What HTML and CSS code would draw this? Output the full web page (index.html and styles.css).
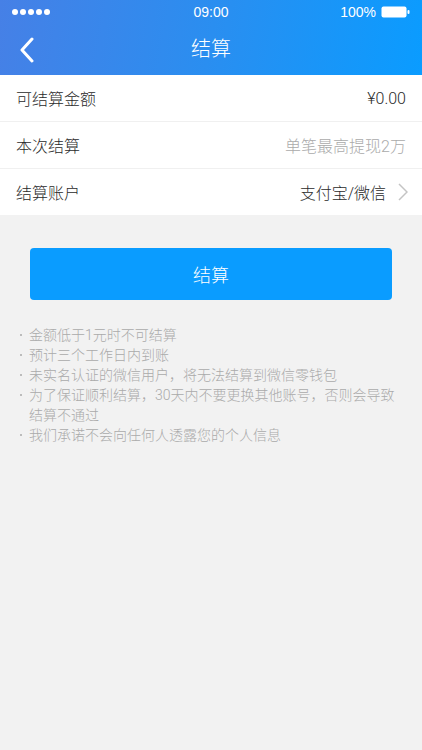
FILE: index.html
```html
<!DOCTYPE html>
<html>
<head>
    <meta charset="utf-8">
    <title>结算</title>
    <link rel="stylesheet" href="styles.css">
</head>
<body>
    <div class="header">
        <div class="status-bar">
            <div class="signal">
                <span class="dot"></span><span class="dot"></span><span class="dot"></span><span class="dot"></span><span class="dot"></span>
            </div>
            <div class="time">09:00</div>
            <div class="battery">
                <span>100%</span>
                <svg width="29" height="12" viewBox="0 0 29 12">
                    <rect x="0.5" y="0.5" width="25" height="11" rx="2" fill="#fff"/>
                    <rect x="26.5" y="4" width="2" height="4" rx="1" fill="#fff"/>
                </svg>
            </div>
        </div>
        <div class="nav-bar">
            <svg class="back" width="16" height="26" viewBox="0 0 16 26">
                <polyline points="13,2 3,13 13,24" fill="none" stroke="#fff" stroke-width="3" stroke-linecap="round" stroke-linejoin="round"/>
            </svg>
            <div class="title">结算</div>
        </div>
    </div>

    <div class="list">
        <div class="row">
            <span class="label">可结算金额</span>
            <span class="value">¥0.00</span>
        </div>
        <div class="row">
            <span class="label">本次结算</span>
            <span class="value placeholder">单笔最高提现2万</span>
        </div>
        <div class="row">
            <span class="label">结算账户</span>
            <span class="value">支付宝/微信
                <svg class="arrow" width="10" height="18" viewBox="0 0 10 18">
                    <polyline points="1,1 9,9 1,17" fill="none" stroke="#c4c4c4" stroke-width="1.5"/>
                </svg>
            </span>
        </div>
    </div>

    <div class="actions">
        <button class="submit">结算</button>
    </div>

    <ul class="notes">
        <li>金额低于1元时不可结算</li>
        <li>预计三个工作日内到账</li>
        <li>未实名认证的微信用户，将无法结算到微信零钱包</li>
        <li>为了保证顺利结算，30天内不要更换其他账号，否则会导致结算不通过</li>
        <li>我们承诺不会向任何人透露您的个人信息</li>
    </ul>
</body>
</html>
```

FILE: styles.css
```css
body {
    margin: 0;
    background-color: #f2f2f2;
    font-family: Roboto, "Noto Sans CJK SC", sans-serif;
    font-weight: 300;
    color: #2a2a2a;
}
.header {
    height: 75px;
    background: linear-gradient(100deg, #4680e6 0%, #2a8ef0 50%, #0a9cff 100%);
    color: #fff;
}
.status-bar {
    height: 24px;
    display: flex;
    align-items: center;
    justify-content: space-between;
    padding: 0 12px;
    font-family: "Liberation Sans", sans-serif;
    font-size: 14px;
    font-weight: 400;
}
.signal {
    display: flex;
    gap: 2px;
    width: 80px;
}
.dot {
    width: 6px;
    height: 6px;
    border-radius: 50%;
    background-color: #fff;
}
.time {
    line-height: 24px;
}
.battery {
    width: 80px;
    display: flex;
    justify-content: flex-end;
    align-items: center;
    gap: 5px;
}
.nav-bar {
    height: 51px;
    display: flex;
    align-items: center;
    padding: 0 19px;
    position: relative;
}
.back {
    display: block;
}
.title {
    position: absolute;
    left: 0;
    right: 0;
    text-align: center;
    font-size: 20px;
    line-height: 51px;
    pointer-events: none;
}
.list {
    background-color: #fff;
}
.row {
    height: 46px;
    display: flex;
    align-items: center;
    justify-content: space-between;
    padding: 0 16px;
    border-bottom: 1px solid #f0f0f0;
    font-size: 16px;
}
.row:last-child {
    border-bottom: none;
}
.value {
    display: flex;
    align-items: center;
    gap: 12px;
}
.placeholder {
    color: #aaa;
}
.arrow {
    margin-right: -2px;
}
.actions {
    padding: 33px 30px 0;
}
.submit {
    width: 100%;
    height: 52px;
    border: none;
    border-radius: 4px;
    background-color: #0a9cff;
    color: #fff;
    font-family: "Noto Sans CJK SC", sans-serif;
    font-weight: 300;
    font-size: 18px;
    cursor: pointer;
}
.notes {
    list-style: none;
    margin: 25px 0 0;
    padding: 0 20px 0 29px;
    font-size: 14px;
    line-height: 20px;
    color: #aaa;
}
.notes li {
    position: relative;
}
.notes li::before {
    content: "";
    position: absolute;
    left: -9px;
    top: 9px;
    width: 2px;
    height: 2px;
    border-radius: 50%;
    background-color: #aaa;
}
```
